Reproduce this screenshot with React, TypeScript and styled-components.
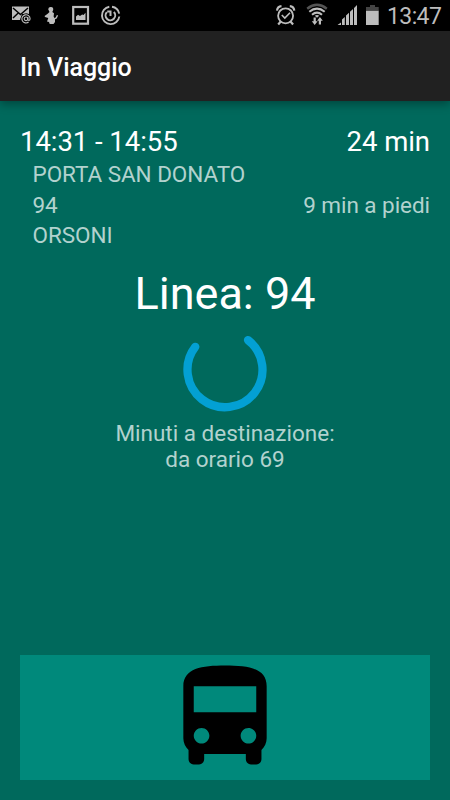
import React from "react";
import styled, { createGlobalStyle } from "styled-components";

const GlobalStyle = createGlobalStyle`
  * { box-sizing: border-box; }
  body { margin: 0; background: #00695c; }
`;

const Screen = styled.div`
  width: 450px;
  height: 800px;
  display: flex;
  flex-direction: column;
  overflow: hidden;
  background: #00695c;
  color: #fff;
  font-family: Roboto, sans-serif;
`;

const StatusBar = styled.header`
  height: 31px;
  flex: none;
  display: flex;
  justify-content: space-between;
  background: #000;
`;

const StatusIcons = styled.svg`
  display: block;
  height: 31px;
`;

const StatusRight = styled.div`
  display: flex;
`;

const Clock = styled.span`
  width: 63px;
  font-size: 23px;
  letter-spacing: -0.6px;
  line-height: 33px;
  color: #bdbdbd;
`;

const AppBar = styled.div`
  height: 70px;
  flex: none;
  padding: 0 20px;
  background: #212121;
  box-shadow: 0 3px 9px rgba(0, 0, 0, 0.35);
`;

const Title = styled.h1`
  margin: 0;
  font-size: 25px;
  font-weight: 500;
  letter-spacing: -0.05px;
  line-height: 74px;
`;

const Content = styled.main`
  flex: 1;
  display: flex;
  flex-direction: column;
  padding: 24px 20px 20px;
`;

const TimeRow = styled.div`
  display: flex;
  justify-content: space-between;
  font-size: 27.5px;
  letter-spacing: -0.05px;
  line-height: 33px;
`;

const Stops = styled.div`
  margin-top: 1.2px;
  padding-left: 12.5px;
`;

const StopRow = styled.div`
  display: flex;
  justify-content: space-between;
  font-size: 22.5px;
  letter-spacing: -0.05px;
  line-height: 30.4px;
  color: #b2d2ce;
`;

const LineName = styled.h2`
  margin: 16.8px 0 0;
  font-size: 45px;
  font-weight: 400;
  line-height: 53px;
  text-align: center;
`;

const Spinner = styled.svg`
  display: block;
  width: 100px;
  height: 100px;
  margin: 0 auto;
`;

const Estimate = styled.p`
  margin: 0;
  font-size: 22.5px;
  line-height: 26.2px;
  text-align: center;
  color: #b2d2ce;
`;

const BusButton = styled.button`
  height: 125px;
  margin: auto 0 0;
  padding: 0 1px 0 0;
  border: 0;
  display: flex;
  justify-content: center;
  background: #00897b;
`;

const NotificationIcons = () => (
  <StatusIcons width="130" viewBox="0 0 130 31" fill="none" stroke="#bdbdbd">
    <path d="M12 6.5H29V14H22L20 20H12Z" fill="#bdbdbd" stroke="none" />
    <path d="M13 8L20.5 14.5L28 8M13 18L18.5 12.8" stroke="#000" strokeWidth="1.5" />
    <circle cx="26.2" cy="18.8" r="5.5" fill="#000" stroke="none" />
    <circle cx="26" cy="18.8" r="1.8" strokeWidth="1.1" />
    <path d="M27.9 17v2.3c0 1.6 2.2 1.4 2.2-.5a4.1 4.1 0 1 0-1.5 3.2" strokeWidth="1.1" />
    <g fill="#bdbdbd" stroke="none">
      <path d="M48.2 9.2Q48.5 6.8 51 7Q53.6 7.2 53.2 10L52.3 12L54 13.2L53.6 16.5L55 19V22L53.5 24H49.7L49 22L47 21.5L48.3 18L45 17.1L44.6 16L47.7 13.8L49.5 12Z" />
    </g>
    <path d="M54.3 18.8L56.2 18L57.5 15.2" strokeWidth="1.4" />
    <rect x="73.2" y="7" width="14.8" height="16.7" strokeWidth="2.2" />
    <path d="M76 20V16.6L78 14.8L80 16L82.2 14.6L83.5 15L85.5 12.7V20Z" fill="#bdbdbd" stroke="none" />
    <path d="M112 6.8A8.7 8.7 0 0 1 119.2 13.6M119.3 16.5A8.7 8.7 0 1 1 109.3 6.8" strokeWidth="1.9" />
    <path d="M106.8 12.2A4.8 4.8 0 1 0 113.8 12M110.5 16V11.5H107.2" strokeWidth="2" />
  </StatusIcons>
);

const SystemIcons = () => (
  <StatusIcons width="112" viewBox="275 0 112 31" fill="none" stroke="#bdbdbd">
    <circle cx="285.6" cy="15.8" r="7.5" strokeWidth="1.8" />
    <path d="M277 10.6A5 5 0 0 1 281.5 6.2M289.8 6.2A5 5 0 0 1 294.3 10.6M280.8 21.5L278.2 24.5M290.5 21.5L293.1 24.5" strokeWidth="2.2" />
    <path d="M281.8 15L284.8 18L290 12.8" strokeWidth="1.6" />
    <path d="M307.2 8.7Q317 1 326.8 8.7" stroke="#555" strokeWidth="2.4" />
    <path d="M309.3 11.8Q317 5.4 324.7 11.8M312 14.8Q317 10.4 322 14.8" strokeWidth="2" />
    <path d="M314.8 15.8Q317 14.2 319.2 15.8L317 17.8Z" fill="#bdbdbd" stroke="none" />
    <g fill="#bdbdbd" stroke="none">
      <path d="M313.6 17.5H315.8V21.3H317.6L314.7 25L311.8 21.3H313.6Z" />
      <path d="M318.8 24.5H321V20.8H322.8L319.9 17.1L317.1 20.8H318.8Z" />
      <path d="M337.5 25L341 22.5V25ZM342 25V19.5L344.8 17V25ZM346 25V15.5L349 12.8V25ZM350 25V11.8L353 9V25ZM354 25V8L357 5V25Z" />
      <path d="M366 10.5H378.7V25H366Z" />
      <path d="M370 5H375V7H378.7V10.5H366V7H370Z" fill="#444" />
    </g>
  </StatusIcons>
);

export default function App() {
  return (
    <>
      <GlobalStyle />
      <Screen>
        <StatusBar>
          <NotificationIcons />
          <StatusRight>
            <SystemIcons />
            <Clock>13:47</Clock>
          </StatusRight>
        </StatusBar>
        <AppBar>
          <Title>In Viaggio</Title>
        </AppBar>
        <Content>
          <TimeRow>
            <span>14:31 - 14:55</span>
            <span>24 min</span>
          </TimeRow>
          <Stops>
            <StopRow>PORTA SAN DONATO</StopRow>
            <StopRow>
              <span>94</span>
              <span>9 min a piedi</span>
            </StopRow>
            <StopRow>ORSONI</StopRow>
          </Stops>
          <LineName>Linea: 94</LineName>
          <Spinner viewBox="0 0 100 100" fill="none">
            <path
              d="M73 20.1A37.5 37.5 0 1 1 20.3 26.8"
              stroke="#03a0d3"
              strokeWidth="8.3"
              strokeLinecap="round"
            />
          </Spinner>
          <Estimate>
            Minuti a destinazione:
            <br />
            da orario 69
          </Estimate>
          <BusButton aria-label="Bus">
            <svg width="125" height="125" viewBox="-0.096 0 24 24">
              <path d="M4 16c0 .88.39 1.67 1 2.22V20c0 .55.45 1 1 1h1c.55 0 1-.45 1-1v-1h8v1c0 .55.45 1 1 1h1c.55 0 1-.45 1-1v-1.78c.61-.55 1-1.34 1-2.22V6c0-3.5-3.58-4-8-4s-8 .5-8 4v10zm3.5 1c-.83 0-1.5-.67-1.5-1.5S6.67 14 7.5 14s1.5.67 1.5 1.5S8.33 17 7.5 17zm9 0c-.83 0-1.5-.67-1.5-1.5s.67-1.5 1.5-1.5 1.5.67 1.5 1.5-.67 1.5-1.5 1.5zm1.5-6H6V6h12v5z" />
            </svg>
          </BusButton>
        </Content>
      </Screen>
    </>
  );
}
